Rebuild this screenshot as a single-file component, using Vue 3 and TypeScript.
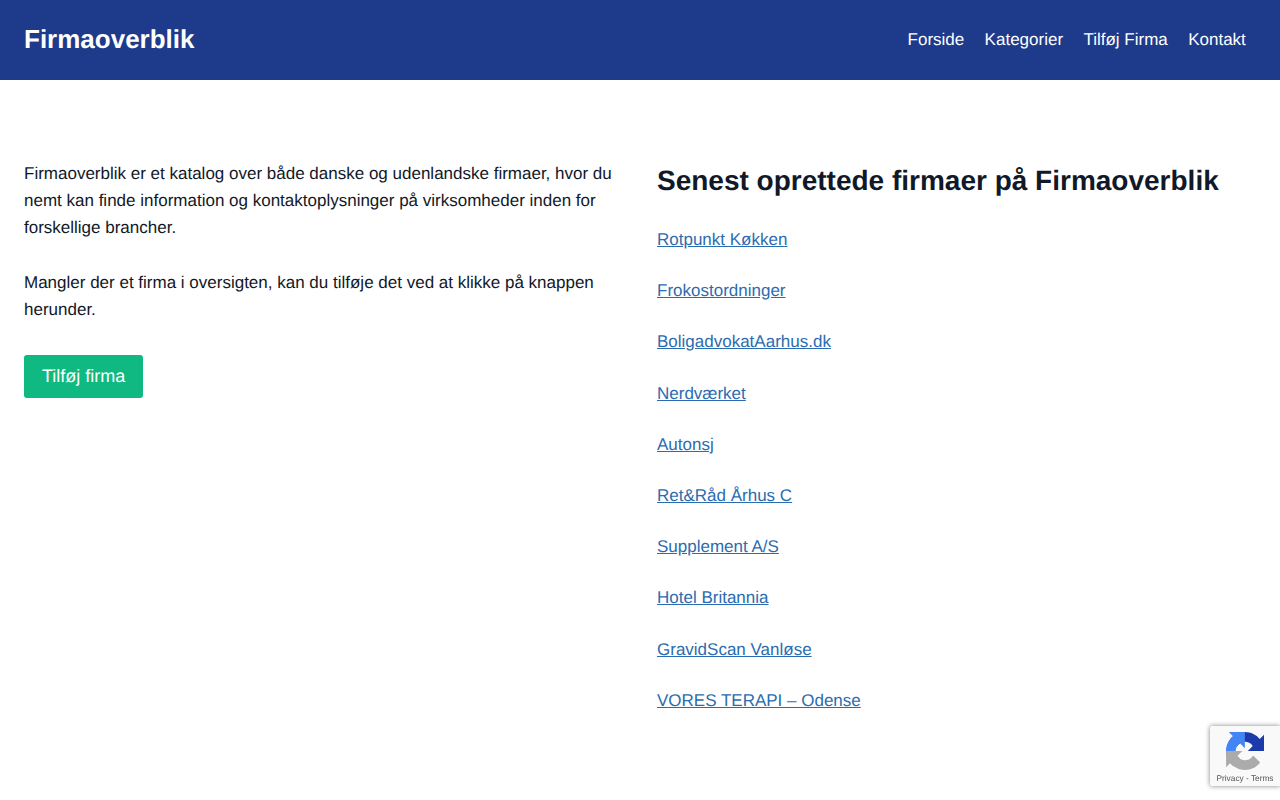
<script setup lang="ts">
const navLinks: string[] = ['Forside', 'Kategorier', 'Tilføj Firma', 'Kontakt']

const companies: string[] = [
  'Rotpunkt Køkken',
  'Frokostordninger',
  'BoligadvokatAarhus.dk',
  'Nerdværket',
  'Autonsj',
  'Ret&Råd Århus C',
  'Supplement A/S',
  'Hotel Britannia',
  'GravidScan Vanløse',
  'VORES TERAPI – Odense'
]
</script>

<template>
  <div class="page">
    <header class="site-header">
      <a class="brand" href="#">Firmaoverblik</a>
      <nav class="main-nav">
        <a v-for="link in navLinks" :key="link" href="#" class="nav-link">{{ link }}</a>
      </nav>
    </header>

    <main class="content">
      <section class="intro">
        <p>Firmaoverblik er et katalog over både danske og udenlandske firmaer, hvor du nemt kan finde information og kontaktoplysninger på virksomheder inden for forskellige brancher.</p>
        <p>Mangler der et firma i oversigten, kan du tilføje det ved at klikke på knappen herunder.</p>
        <a class="add-button" href="#">Tilføj firma</a>
      </section>

      <section class="latest">
        <h2>Senest oprettede firmaer på Firmaoverblik</h2>
        <ul class="company-list">
          <li v-for="company in companies" :key="company">
            <a href="#">{{ company }}</a>
          </li>
        </ul>
      </section>
    </main>

    <div class="recaptcha">
      <svg class="recaptcha-logo" viewBox="0 0 64 64" width="38" height="38" aria-hidden="true">
        <path d="M64 31.955l-.033-1.37V4.687l-7.16 7.16C50.948 4.674 42.033.093 32.05.093c-10.4 0-19.622 4.96-25.458 12.64l11.736 11.86a15.55 15.55 0 0 1 4.754-5.334c2.05-1.6 4.952-2.906 8.968-2.906.485 0 .86.057 1.135.163 4.976.393 9.288 3.14 11.83 7.124l-8.307 8.307c10.523-.04 22.4-.066 27.295.005" fill="#1c3aa9" />
        <path d="M31.862.094l-1.37.033H4.594l7.16 7.16C4.58 13.147 0 22.06 0 32.046c0 10.4 4.96 19.622 12.64 25.458L24.5 45.768a15.55 15.55 0 0 1-5.334-4.754c-1.6-2.05-2.906-4.952-2.906-8.968 0-.485.057-.86.163-1.135.393-4.976 3.14-9.288 7.124-11.83l8.307 8.307c-.04-10.523-.066-22.4.005-27.295" fill="#4285f4" />
        <path d="M.1 32.046l.033 1.37v25.898l7.16-7.16c5.86 7.173 14.774 11.754 24.76 11.754 10.4 0 19.622-4.96 25.458-12.64L45.773 39.4a15.55 15.55 0 0 1-4.754 5.334c-2.05 1.6-4.952 2.906-8.968 2.906-.485 0-.86-.057-1.135-.163-4.976-.393-9.288-3.14-11.83-7.124l8.307-8.307C17.87 32.086 5.995 32.112 1.1 32.04" fill="#ababab" />
      </svg>
      <div class="recaptcha-links">Privacy - Terms</div>
    </div>
  </div>
</template>

<style>
html,
body {
  margin: 0;
  background: #fff;
}
</style>

<style scoped>
.page {
  min-height: 800px;
  font-family: "Liberation Sans", Arial, sans-serif;
  font-size: 17px;
  line-height: 27.2px;
  color: #111827;
  text-rendering: geometricPrecision;
  overflow: hidden;
}

.site-header {
  height: 80px;
  box-sizing: border-box;
  padding: 0 24px;
  display: flex;
  align-items: center;
  justify-content: space-between;
  background: #1e3a8a;
}

.brand {
  color: #fff;
  font-size: 26px;
  font-weight: 700;
  text-decoration: none;
}

.main-nav {
  display: flex;
}

.nav-link {
  padding: 0 10.2px;
  color: #fff;
  text-decoration: none;
}

.content {
  display: grid;
  grid-template-columns: 1fr 1fr;
  column-gap: 34px;
  padding: 80px 24px 0;
}

.intro p {
  margin: 0 0 27.2px;
}

.add-button {
  display: inline-block;
  margin-top: 4.6px;
  padding: 8px 18px;
  border-radius: 3px;
  background: #10b981;
  color: #fff;
  font-size: 18px;
  text-decoration: none;
}

.latest h2 {
  margin: 0 0 24px;
  font-size: 28px;
  line-height: 42px;
  font-weight: 700;
}

.company-list {
  margin: 0;
  padding: 0;
  list-style: none;
}

.company-list li {
  margin-bottom: 24px;
}

.company-list a {
  color: #2b6cb0;
}

.recaptcha {
  position: fixed;
  right: 0;
  bottom: 14px;
  width: 70px;
  height: 60px;
  background: #f9f9f9;
  border-radius: 2px 0 0 2px;
  box-shadow: 0 0 5px gray;
  display: flex;
  flex-direction: column;
  align-items: center;
}

.recaptcha-logo {
  margin-top: 6px;
  display: block;
}

.recaptcha-links {
  position: absolute;
  left: 0;
  right: 0;
  bottom: 2px;
  font-size: 8.3px;
  line-height: 12px;
  text-align: center;
  color: #555;
}
</style>
